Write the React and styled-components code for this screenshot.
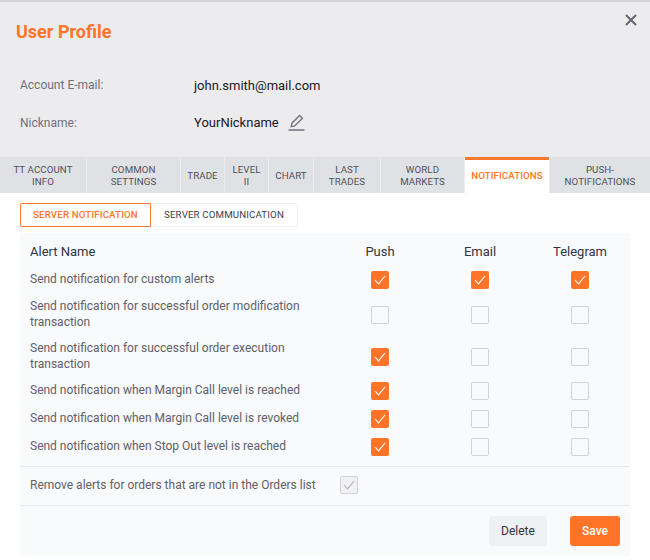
import React from 'react';
import styled, { createGlobalStyle } from 'styled-components';

const Global = createGlobalStyle`
  html, body { margin: 0; padding: 0; background: #fff; }
  body { font-family: Roboto, "Liberation Sans", sans-serif; }
  * { box-sizing: border-box; }
`;

const Page = styled.div`
  width: 650px;
  height: 560px;
  overflow: hidden;
  display: flex;
  flex-direction: column;
`;
const TopStrip = styled.div`
  height: 2px;
  background: #d4d4d6;
`;
const Header = styled.header`
  height: 155px;
  background: #ecebee;
  padding: 19px 16px 0;
  position: relative;
`;
const Title = styled.h1`
  margin: 0;
  font-size: 18px;
  line-height: 22px;
  font-weight: 700;
  color: #ff7428;
`;
const Close = styled.button`
  position: absolute;
  top: 11px;
  right: 12px;
  width: 14px;
  height: 14px;
  padding: 0;
  border: 0;
  background: none;
  display: flex;
  color: #6a6b72;
`;
const InfoRow = styled.div`
  display: grid;
  grid-template-columns: 174px 1fr;
  align-items: center;
  padding-left: 4px;
  height: 38px;
  &:first-of-type { margin-top: 23px; }
`;
const InfoLabel = styled.span`
  font-size: 12px;
  color: #6f7079;
`;
const InfoValue = styled.span`
  display: flex;
  align-items: center;
  gap: 9px;
  font-size: 13px;
  color: #1a1a1e;
  margin-top: ${p => (p.$raised ? '-1px' : '0')};
`;
const Tabs = styled.nav`
  display: flex;
  height: 36px;
  background: #ecebee;
  gap: 1px;
`;
const Tab = styled.div`
  width: ${p => p.$w}px;
  flex: none;
  display: flex;
  align-items: center;
  justify-content: center;
  text-align: center;
  font-size: 9.7px;
  line-height: 12px;
  letter-spacing: 0.1px;
  text-transform: uppercase;
  background: ${p => (p.$active ? '#fff' : '#e0e1e4')};
  color: ${p => (p.$active ? '#ff7428' : '#4f505a')};
  font-weight: ${p => (p.$active ? 500 : 400)};
  border-top: ${p => (p.$active ? '3px solid #f77a2e' : '0')};
  padding: ${p => (p.$active ? '0 0 2px' : '1px 5px 0')};
`;
const Body = styled.main`
  flex: 1;
  background: #fff;
  padding: 10px 20px 4px;
  display: flex;
  flex-direction: column;
`;
const SubTabs = styled.div`
  display: flex;
  height: 24px;
`;
const SubTab = styled.div`
  width: ${p => p.$w}px;
  display: flex;
  align-items: center;
  justify-content: center;
  font-size: 9.7px;
  letter-spacing: 0.15px;
  text-transform: uppercase;
  font-weight: ${p => (p.$active ? 500 : 400)};
  color: ${p => (p.$active ? '#ff7428' : '#3d3e47')};
  border: 1px solid ${p => (p.$active ? '#f77a2e' : '#f1f1f3')};
  border-left-width: ${p => (p.$active ? '1px' : '0')};
  border-radius: ${p => (p.$active ? '2px 0 0 2px' : '0 2px 2px 0')};
  padding-bottom: 1px;
`;
const Panel = styled.section`
  margin-top: 6px;
  flex: 1;
  background: #f9fafc;
`;
const Grid = styled.div`
  display: grid;
  grid-template-columns: 310px 100px 100px 100px;
  padding: 8px 0 5px 0;
`;
const Head = styled.div`
  height: 21px;
  display: flex;
  align-items: center;
  justify-content: ${p => (p.$left ? 'flex-start' : 'center')};
  padding-left: ${p => (p.$left ? '10px' : '0')};
  font-size: 13px;
  color: #33343c;
  margin-bottom: 4px;
`;
const RowLabel = styled.div`
  height: ${p => p.$h}px;
  display: flex;
  align-items: center;
  padding: ${p => (p.$tall ? '0 30px 2px 10px' : '0 10px 2px')};
  font-size: 12px;
  line-height: 16px;
  color: #5f6069;
`;
const Cell = styled.div`
  height: ${p => p.$h}px;
  display: flex;
  align-items: center;
  justify-content: center;
`;
const Box = styled.span`
  width: 18px;
  height: 18px;
  flex: none;
  display: inline-flex;
  align-items: center;
  justify-content: center;
  border-radius: 2px;
  background: ${p => (p.$on ? '#ff7428' : p.$muted ? '#f1f1f3' : 'transparent')};
  border: ${p => (p.$on ? '0' : '1px solid #d2d3d6')};
  color: ${p => (p.$on ? '#fff' : '#b0b1b5')};
`;
const Divider = styled.div`
  height: 1px;
  background: #e8e9eb;
`;
const RemoveRow = styled.div`
  height: 38px;
  display: flex;
  align-items: center;
  gap: 24px;
  padding: 0 0 2px 10px;
  font-size: 12px;
  color: #5f6069;
`;
const Actions = styled.div`
  display: flex;
  justify-content: flex-end;
  gap: 23px;
  padding: 10px 10px 0 0;
`;
const Btn = styled.button`
  height: 30px;
  width: ${p => p.$w}px;
  border: 0;
  border-radius: 3px;
  font-family: inherit;
  font-size: 12px;
  font-weight: ${p => (p.$primary ? 500 : 400)};
  background: ${p => (p.$primary ? '#ff7428' : '#eff0f2')};
  color: ${p => (p.$primary ? '#fff' : '#33343c')};
`;

const Check = () => (
  <svg width="12" height="10" viewBox="0 0 12 10" fill="none" stroke="currentColor" strokeWidth="1.1">
    <path d="M1 5l3.5 3.8L11 1" />
  </svg>
);

const tabs = [
  ['TT Account Info', 86],
  ['Common Settings', 93],
  ['Trade', 43],
  ['Level II', 43],
  ['Chart', 44],
  ['Last Trades', 66],
  ['World Markets', 83],
  ['Notifications', 84, true],
  ['Push-Notifications', 100],
];

const rows = [
  ['Send notification for custom alerts', 28, [1, 1, 1]],
  ['Send notification for successful order modification transaction', 42, [0, 0, 0], true],
  ['Send notification for successful order execution transaction', 41, [1, 0, 0], true],
  ['Send notification when Margin Call level is reached', 28, [1, 0, 0]],
  ['Send notification when Margin Call level is revoked', 28, [1, 0, 0]],
  ['Send notification when Stop Out level is reached', 28, [1, 0, 0]],
];

export default function App() {
  return (
    <Page>
      <Global />
      <TopStrip />
      <Header>
        <Title>User Profile</Title>
        <Close aria-label="Close">
          <svg width="14" height="14" viewBox="0 0 14 14" stroke="currentColor" strokeWidth="2.2" fill="none">
            <path d="M2 2l10 10M12 2L2 12" />
          </svg>
        </Close>
        <InfoRow>
          <InfoLabel>Account E-mail:</InfoLabel>
          <InfoValue>john.smith@mail.com</InfoValue>
        </InfoRow>
        <InfoRow>
          <InfoLabel>Nickname:</InfoLabel>
          <InfoValue $raised>
            YourNickname
            <svg width="17" height="17" viewBox="0 0 17 17" fill="none" stroke="#72737b" strokeWidth="1.35">
              <path d="M3.2 12.6l.7-3.4L11.6 1.5l2.8 2.8-7.7 7.6z" />
              <path d="M0.5 16h16" strokeWidth="1.5" />
            </svg>
          </InfoValue>
        </InfoRow>
      </Header>
      <Tabs>
        {tabs.map(([t, w, a]) => (
          <Tab key={t} $w={w} $active={a}>{t}</Tab>
        ))}
      </Tabs>
      <Body>
        <SubTabs>
          <SubTab $w={131} $active>Server Notification</SubTab>
          <SubTab $w={147}>Server Communication</SubTab>
        </SubTabs>
        <Panel>
          <Grid>
            <Head $left>Alert Name</Head>
            <Head>Push</Head>
            <Head>Email</Head>
            <Head>Telegram</Head>
            {rows.map(([label, h, vals, tall]) => (
              <React.Fragment key={label}>
                <RowLabel $h={h} $tall={tall}>{label}</RowLabel>
                {vals.map((v, i) => (
                  <Cell key={i} $h={h}>
                    <Box $on={!!v}>{v ? <Check /> : null}</Box>
                  </Cell>
                ))}
              </React.Fragment>
            ))}
          </Grid>
          <Divider />
          <RemoveRow>
            Remove alerts for orders that are not in the Orders list
            <Box $muted><Check /></Box>
          </RemoveRow>
          <Divider />
          <Actions>
            <Btn $w={58}>Delete</Btn>
            <Btn $w={50} $primary>Save</Btn>
          </Actions>
        </Panel>
      </Body>
    </Page>
  );
}
